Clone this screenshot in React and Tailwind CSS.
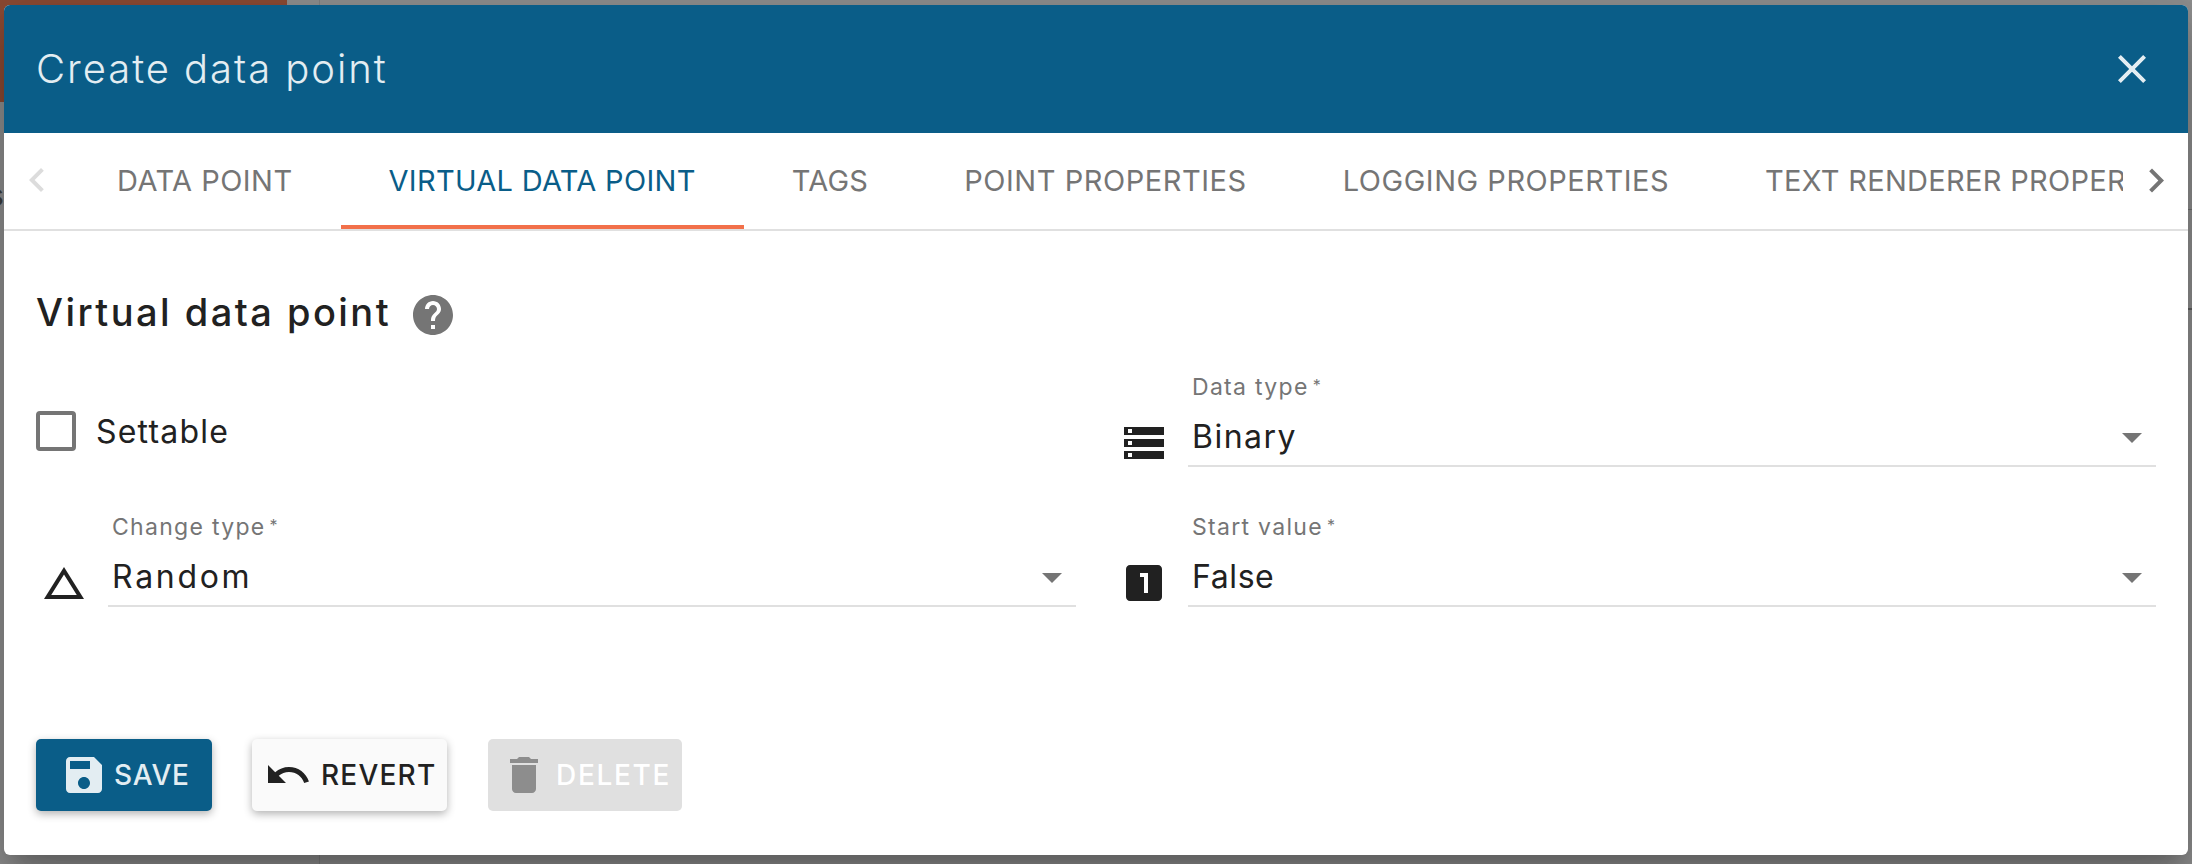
const FONT = "font-['Inter','Liberation_Sans',sans-serif]";

function Icon({ d, className }) {
  return (
    <svg viewBox="0 0 24 24" className={className} fill="currentColor" aria-hidden="true">
      <path d={d} />
    </svg>
  );
}

const P = {
  close: "M19 6.41L17.59 5 12 10.59 6.41 5 5 6.41 10.59 12 5 17.59 6.41 19 12 13.41 17.59 19 19 17.59 13.41 12 19 6.41z",
  left: "M15.41 16.09l-4.58-4.59 4.58-4.59L14 5.5l-6 6 6 6z",
  right: "M8.59 16.34l4.58-4.59-4.58-4.59L10 5.75l6 6-6 6z",
  help: "M12 2C6.48 2 2 6.48 2 12s4.48 10 10 10 10-4.48 10-10S17.52 2 12 2zm1 17h-2v-2h2v2zm2.07-7.75l-.9.92C13.45 12.9 13 13.5 13 15h-2v-.5c0-1.1.45-2.1 1.17-2.83l1.24-1.26c.37-.36.59-.86.59-1.41 0-1.1-.9-2-2-2s-2 .9-2 2H8c0-2.21 1.79-4 4-4s4 1.79 4 4c0 .88-.36 1.68-.93 2.25z",
  storage: "M2 20h20v-4H2v4zm2-3h2v2H4v-2zM2 4v4h20V4H2zm4 3H4V5h2v2zm-4 7h20v-4H2v4zm2-3h2v2H4v-2z",
  delta: "M12 7.77L18.39 18H5.61L12 7.77M12 4L2 20h20L12 4z",
  one: "M19 3H5c-1.1 0-2 .9-2 2v14c0 1.1.9 2 2 2h14c1.1 0 2-.9 2-2V5c0-1.1-.9-2-2-2zm-5 14h-2V9h-2V7h4v10z",
  arrow: "M7 10l5 5 5-5z",
  save: "M17 3H5c-1.11 0-2 .9-2 2v14c0 1.1.89 2 2 2h14c1.1 0 2-.9 2-2V7l-4-4zm-5 16c-1.66 0-3-1.34-3-3s1.34-3 3-3 3 1.34 3 3-1.34 3-3 3zm3-10H5V5h10v4z",
  undo: "M12.5 8c-2.65 0-5.05.99-6.9 2.6L2 7v9h9l-3.62-3.62c1.39-1.16 3.16-1.88 5.12-1.88 3.54 0 6.55 2.31 7.6 5.5l2.37-.78C21.08 11.03 17.15 8 12.5 8z",
  trash: "M6 19c0 1.1.9 2 2 2h8c1.1 0 2-.9 2-2V7H6v12zM19 4h-3.5l-1-1h-5l-1 1H5v2h14V4z",
};

function Tab({ label, active, track }) {
  return (
    <div
      className={`relative flex h-full shrink-0 items-center px-12 text-[29px] font-normal whitespace-nowrap ${track} ${
        active ? "text-[#0a5d88]" : "text-[#757575]"
      }`}
    >
      {label}
      {active && <div className="absolute inset-x-0 bottom-0 h-1 bg-[#f2704a]" />}
    </div>
  );
}

function Select({ icon, label, value, valueTrack }) {
  return (
    <div className="flex items-end">
      <Icon d={icon} className="ml-1 size-12 shrink-0 text-[#212121]" />
      <div className="relative ml-5 flex h-[100px] flex-1 flex-col border-b-2 border-[#e0e0e0]">
        <div className="mt-[2px] pl-1 text-[23px] leading-8 tracking-[1.3px] text-[#757575]">
          {label}
          <span className="ml-1 align-[4px] text-[16px]">*</span>
        </div>
        <div className={`mt-[14px] pl-1 text-[32px] leading-10 text-[#212121] ${valueTrack}`}>{value}</div>
        <Icon d={P.arrow} className="absolute right-0 bottom-1 size-12 text-[#757575]" />
      </div>
    </div>
  );
}

function Button({ icon, label, className, iconClass, textClass }) {
  return (
    <div className={`flex h-[72px] items-center rounded-[5px] text-[28px] font-[450] ${className}`}>
      <Icon d={icon} className={`size-12 shrink-0 ${iconClass}`} />
      <span className={`whitespace-nowrap ${textClass}`}>{label}</span>
    </div>
  );
}

export default function App() {
  return (
    <div className={`relative h-[864px] w-[2192px] overflow-hidden bg-[#8f8f8f] ${FONT}`}>
      <div className="absolute top-0 left-0 h-[102px] w-[287px] bg-[#8c4a33]" />
      <div className="absolute top-0 bottom-0 left-[319px] w-px bg-black/10" />
      <span className="absolute top-[175px] left-[-12px] text-[30px] leading-10 text-[#3c3c3c]">s</span>
      <div className="absolute top-[209px] right-0 h-px w-1 bg-[#6f6f6f]" />
      <div className="absolute top-[308px] right-0 h-[2px] w-1 bg-[#5f5f5f]" />

      <div className="relative mt-[5px] ml-1 flex h-[850px] w-[2184px] flex-col overflow-hidden rounded-[6px] bg-white shadow-[0_15px_21px_-10px_rgba(0,0,0,0.2),0_34px_53px_4px_rgba(0,0,0,0.14),0_13px_64px_11px_rgba(0,0,0,0.12)]">
        <header className="flex h-[128px] shrink-0 items-center justify-between bg-[#0a5d88] pr-8 pl-8 text-[#e3edf2]">
          <h1 className="text-[40px] font-light tracking-[1.95px]">Create data point</h1>
          <Icon d={P.close} className="size-12" />
        </header>

        <nav className="flex h-[98px] shrink-0 items-stretch border-b-2 border-[#e0e0e0]">
          <div className="flex w-[65px] shrink-0 items-center justify-center text-[#dcdcdc]">
            <Icon d={P.left} className="size-12" />
          </div>
          <div className="flex min-w-0 flex-1 overflow-hidden">
            <Tab label="DATA POINT" track="tracking-[0.46px]" />
            <Tab label="VIRTUAL DATA POINT" active track="tracking-[0.3px]" />
            <Tab label="TAGS" track="tracking-[0.25px]" />
            <Tab label="POINT PROPERTIES" track="tracking-[0.55px]" />
            <Tab label="LOGGING PROPERTIES" track="tracking-[0.52px]" />
            <Tab label="TEXT RENDERER PROPERTIES" track="tracking-[0.3px]" />
          </div>
          <div className="flex w-[65px] shrink-0 items-center justify-center text-[#757575]">
            <Icon d={P.right} className="size-12" />
          </div>
        </nav>

        <main className="flex flex-1 flex-col px-8 pt-[60px]">
          <div className="flex h-12 items-center">
            <h2 className="pb-[6px] text-[38px] font-[450] tracking-[2.47px] text-[#212121]">Virtual data point</h2>
            <Icon d={P.help} className="ml-[18px] size-12 text-[#757575]" />
          </div>

          <div className="mt-7 grid grid-cols-2 gap-x-10 gap-y-10">
            <div className="flex h-[100px] items-end pb-4">
              <div className="size-10 rounded-[4px] border-4 border-[#757575]" />
              <span className="ml-5 text-[32px] leading-[38px] tracking-[1.2px] text-[#212121]">Settable</span>
            </div>
            <Select icon={P.storage} label="Data type" value="Binary" valueTrack="tracking-[1.5px]" />
            <Select icon={P.delta} label="Change type" value="Random" valueTrack="tracking-[2.7px]" />
            <Select icon={P.one} label="Start value" value="False" valueTrack="tracking-[0.6px]" />
          </div>

          <div className="mt-[132px] flex">
            <Button
              icon={P.save}
              label="SAVE"
              textClass="ml-[6px] tracking-[0.8px]"
              className="w-[176px] bg-[#0a5d88] pl-6 text-[#e3edf2] shadow-[0_3px_8px_rgba(0,0,0,0.3)]"
            />
            <Button
              icon={P.undo}
              label="REVERT"
              textClass="ml-[9px] tracking-[1.2px]"
              className="ml-10 w-[195px] bg-[#fafafa] pl-3 text-[#212121] shadow-[0_3px_8px_rgba(0,0,0,0.3)]"
            />
            <Button
              icon={P.trash}
              label="DELETE"
              textClass="ml-[8px] tracking-[1.7px]"
              iconClass="text-[#8d8d8d]"
              className="ml-[41px] w-[194px] bg-[#e0e0e0] pl-3 text-white"
            />
          </div>
        </main>
      </div>
    </div>
  );
}
